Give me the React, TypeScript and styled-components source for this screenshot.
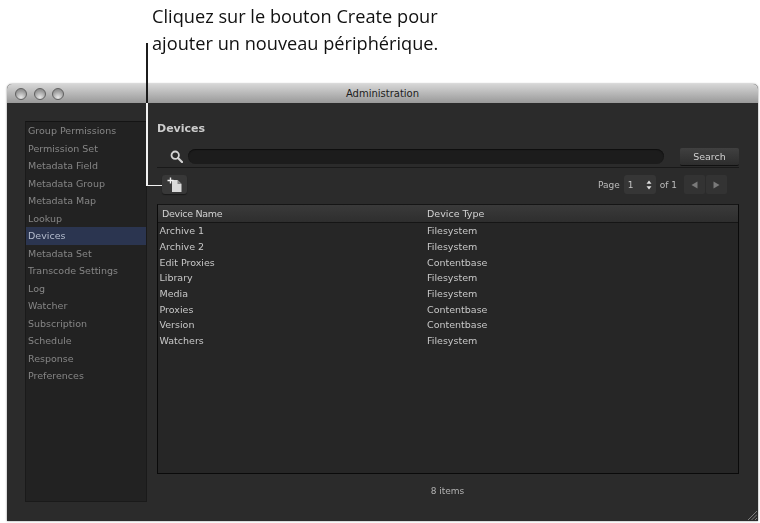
import styled, { createGlobalStyle } from "styled-components";

const sections = [
  "Group Permissions",
  "Permission Set",
  "Metadata Field",
  "Metadata Group",
  "Metadata Map",
  "Lookup",
  "Devices",
  "Metadata Set",
  "Transcode Settings",
  "Log",
  "Watcher",
  "Subscription",
  "Schedule",
  "Response",
  "Preferences",
];

const devices = [
  ["Archive 1", "Filesystem"],
  ["Archive 2", "Filesystem"],
  ["Edit Proxies", "Contentbase"],
  ["Library", "Filesystem"],
  ["Media", "Filesystem"],
  ["Proxies", "Contentbase"],
  ["Version", "Contentbase"],
  ["Watchers", "Filesystem"],
];

const App = () => {
  return (
    <Page>
      <GlobalStyle />
      <Callout>
        Cliquez sur le bouton Create pour
        <br />
        ajouter un nouveau périphérique.
      </Callout>
      <LeaderDark />
      <LeaderLight />
      <LeaderFoot />
      <Window>
        <TitleBar>
          <Lights>
            <Light />
            <Light />
            <Light />
          </Lights>
          <Title>Administration</Title>
        </TitleBar>
        <Body>
          <Sidebar>
            {sections.map((name) => (
              <SideItem key={name} $active={name === "Devices"}>
                {name}
              </SideItem>
            ))}
          </Sidebar>
          <Main>
            <Heading>Devices</Heading>
            <SearchRow>
              <SearchIcon viewBox="0 0 13 13">
                <circle cx="5.2" cy="5.2" r="3.7" fill="none" stroke="#d4d4d4" strokeWidth="1.8" />
                <path d="M8 8 L12 12" stroke="#d4d4d4" strokeWidth="2.2" strokeLinecap="round" />
              </SearchIcon>
              <SearchField />
              <SearchButton>Search</SearchButton>
            </SearchRow>
            <Toolbar>
              <CreateButton>
                <svg width="16" height="16" viewBox="0 0 16 16">
                  <path d="M5 3 H10.5 L14.5 7 V15 H5 Z" fill="#dadada" />
                  <path d="M10.5 3 L14.5 7 H10.5 Z" fill="#858585" />
                  <path d="M3.5 0.5 V6.5 M0.5 3.5 H6.5" stroke="#f2f2f2" strokeWidth="1.4" />
                </svg>
              </CreateButton>
              <Pager>
                Page
                <PageSelect>
                  1
                  <svg width="6" height="10" viewBox="0 0 6 10">
                    <path d="M3 0.5 L5.5 3.8 H0.5 Z M3 9.5 L5.5 6.2 H0.5 Z" fill="#dedede" />
                  </svg>
                </PageSelect>
                of 1
                <PagerArrows>
                  <ArrowButton>
                    <svg width="7" height="8" viewBox="0 0 7 8">
                      <path d="M0.5 4 L6.5 0.5 V7.5 Z" fill="#7a7a7a" />
                    </svg>
                  </ArrowButton>
                  <ArrowButton>
                    <svg width="7" height="8" viewBox="0 0 7 8">
                      <path d="M6.5 4 L0.5 0.5 V7.5 Z" fill="#7a7a7a" />
                    </svg>
                  </ArrowButton>
                </PagerArrows>
              </Pager>
            </Toolbar>
            <Table>
              <HeaderRow>
                <NameCell>Device Name</NameCell>
                <span>Device Type</span>
              </HeaderRow>
              <Rows>
                {devices.map(([name, type]) => (
                  <Row key={name}>
                    <RowName>{name}</RowName>
                    <span>{type}</span>
                  </Row>
                ))}
              </Rows>
            </Table>
            <Footer>8 items</Footer>
          </Main>
        </Body>
        <Grip viewBox="0 0 10 10">
          <path d="M1 10 L10 1 M4.5 10 L10 4.5 M8 10 L10 8" stroke="#7d7d7d" strokeWidth="1" />
        </Grip>
      </Window>
    </Page>
  );
};

export default App;

const GlobalStyle = createGlobalStyle`
  html, body {
    margin: 0;
    background: #ffffff;
  }
`;

const Page = styled.div`
  position: relative;
  width: 760px;
  height: 523px;
  overflow: hidden;
  padding-top: 3px;
  box-sizing: border-box;
  filter: blur(0.35px);
`;

const Callout = styled.div`
  height: 81px;
  padding-left: 152px;
  font-family: "Open Sans", sans-serif;
  font-size: 18.2px;
  line-height: 27px;
  color: #111111;
  white-space: nowrap;
`;

const LeaderDark = styled.div`
  position: absolute;
  left: 146px;
  top: 43px;
  width: 1.5px;
  height: 60px;
  background: #1c1c1c;
  z-index: 2;
`;

const LeaderLight = styled.div`
  position: absolute;
  left: 146px;
  top: 103px;
  width: 1.5px;
  height: 83px;
  background: #f2f2f2;
  z-index: 2;
`;

const LeaderFoot = styled.div`
  position: absolute;
  left: 146px;
  top: 184.5px;
  width: 16px;
  height: 1.5px;
  background: #f2f2f2;
  z-index: 2;
`;

const Window = styled.div`
  position: relative;
  margin-left: 7px;
  width: 751px;
  height: 437px;
  display: flex;
  flex-direction: column;
  background: #2b2b2b;
  border-radius: 5px 5px 0 0;
  box-shadow: 0 0 2px rgba(0, 0, 0, 0.55);
  font-family: "DejaVu Sans", sans-serif;
  font-size: 9.5px;
`;

const TitleBar = styled.div`
  position: relative;
  flex: none;
  height: 19px;
  display: flex;
  align-items: center;
  justify-content: center;
  background: linear-gradient(#d6d6d6, #999999);
  border-radius: 5px 5px 0 0;
`;

const Lights = styled.div`
  position: absolute;
  left: 8px;
  top: 4px;
  display: flex;
  gap: 6.5px;
`;

const Light = styled.span`
  width: 12px;
  height: 12px;
  border-radius: 50%;
  box-sizing: border-box;
  border: 1px solid #606060;
  background: radial-gradient(circle at 50% 85%, #e8e8e8, #9c9c9c 65%, #808080);
`;

const Title = styled.span`
  color: #1c1c1c;
  font-size: 10px;
`;

const Body = styled.div`
  flex: 1;
  display: flex;
  padding: 18px 19px 18px 18px;
  min-height: 0;
`;

const Sidebar = styled.div`
  flex: none;
  width: 122px;
  height: 381px;
  box-sizing: border-box;
  background: #222222;
  border: 1px solid #1a1a1a;
  border-top-color: #141414;
  display: flex;
  flex-direction: column;
  align-items: stretch;
`;

const SideItem = styled.div<{ $active?: boolean }>`
  height: 17.5px;
  line-height: 17.5px;
  padding-left: 2px;
  color: ${(p) => (p.$active ? "#b4bccd" : "#868686")};
  background: ${(p) => (p.$active ? "#2b3550" : "transparent")};
  white-space: nowrap;
`;

const Main = styled.div`
  flex: 1;
  min-width: 0;
  margin-left: 10px;
  display: flex;
  flex-direction: column;
`;

const Heading = styled.div`
  height: 26px;
  margin-top: -1px;
  line-height: 17px;
  font-size: 11px;
  font-weight: bold;
  color: #cccccc;
`;

const SearchRow = styled.div`
  flex: none;
  height: 22px;
  display: flex;
  align-items: center;
  padding-left: 13px;
  border-bottom: 1px solid #191919;
  box-sizing: border-box;
`;

const SearchIcon = styled.svg`
  flex: none;
  width: 13px;
  height: 13px;
  margin-right: 5px;
`;

const SearchField = styled.div`
  flex: 1;
  height: 15px;
  border-radius: 8px;
  background: #1c1c1c;
  box-shadow: inset 0 1px 1px #0e0e0e;
`;

const SearchButton = styled.button`
  flex: none;
  width: 59px;
  height: 18px;
  margin-left: 16px;
  padding: 0;
  border: 0;
  border-radius: 2px;
  border-bottom: 1px solid #111111;
  background: linear-gradient(#404040, #2d2d2d);
  color: #d0d0d0;
  font: inherit;
`;

const Toolbar = styled.div`
  flex: none;
  height: 36px;
  display: flex;
  align-items: flex-start;
  justify-content: space-between;
  padding: 7px 12px 0 5px;
  box-sizing: border-box;
`;

const CreateButton = styled.button`
  width: 25px;
  height: 19px;
  padding: 0;
  display: flex;
  align-items: center;
  justify-content: center;
  border: 0;
  border-radius: 3px;
  background: #383838;
  box-shadow: 0 1px 1px #191919;
`;

const Pager = styled.div`
  display: flex;
  align-items: center;
  height: 19px;
  gap: 4px;
  color: #bcbcbc;
  font-size: 9px;
`;

const PageSelect = styled.div`
  width: 32px;
  height: 19px;
  box-sizing: border-box;
  padding: 0 4px 0 4px;
  display: flex;
  align-items: center;
  justify-content: space-between;
  border-radius: 3px;
  background: #363636;
  color: #c4c4c4;
`;

const PagerArrows = styled.div`
  display: flex;
  gap: 1px;
  margin-left: 3px;
`;

const ArrowButton = styled.div`
  width: 21px;
  height: 19px;
  display: flex;
  align-items: center;
  justify-content: center;
  background: #333333;
  border-radius: 2px;
`;

const Table = styled.div`
  flex: none;
  height: 270px;
  width: 582px;
  box-sizing: border-box;
  border: 1px solid #0a0a0a;
  border-top-color: #151515;
  background: #262626;
  display: flex;
  flex-direction: column;
`;

const HeaderRow = styled.div`
  flex: none;
  height: 17px;
  display: grid;
  grid-template-columns: 269px 1fr;
  align-items: center;
  background: linear-gradient(#3a3a3a, #2e2e2e);
  border-bottom: 1px solid #151515;
  color: #d2d2d2;
`;

const NameCell = styled.span`
  padding-left: 4px;
  letter-spacing: -0.3px;
`;

const Rows = styled.div`
  padding-top: 0;
`;

const Row = styled.div`
  height: 15.7px;
  display: grid;
  grid-template-columns: 269px 1fr;
  align-items: center;
  color: #c8c8c8;
`;

const RowName = styled.span`
  padding-left: 1.5px;
`;

const Footer = styled.div`
  flex: 1;
  display: flex;
  align-items: center;
  justify-content: center;
  padding-top: 4px;
  margin-right: 1px;
  color: #b2b2b2;
  font-size: 9px;
`;

const Grip = styled.svg`
  position: absolute;
  right: 1px;
  bottom: 1px;
  width: 10px;
  height: 10px;
`;
